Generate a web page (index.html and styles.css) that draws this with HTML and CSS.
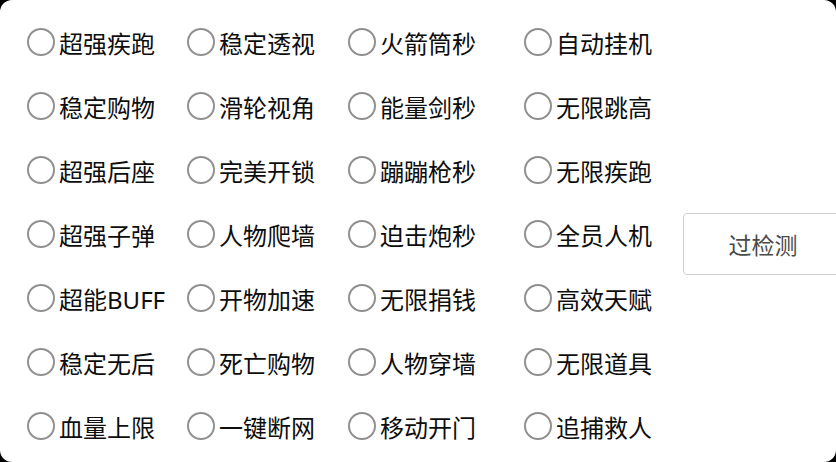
FILE: index.html
```html
<!DOCTYPE html>
<html lang="zh-CN">
<head>
    <meta charset="UTF-8">
    <meta name="viewport" content="width=device-width, initial-scale=1.0">
    <title>功能面板</title>
    <link rel="stylesheet" href="styles.css">
</head>
<body>
    <div class="panel">
        <div class="options">
            <label class="option"><input type="radio" name="opt"><span class="dot"></span>超强疾跑</label>
            <label class="option"><input type="radio" name="opt"><span class="dot"></span>稳定透视</label>
            <label class="option"><input type="radio" name="opt"><span class="dot"></span>火箭筒秒</label>
            <label class="option"><input type="radio" name="opt"><span class="dot"></span>自动挂机</label>

            <label class="option"><input type="radio" name="opt"><span class="dot"></span>稳定购物</label>
            <label class="option"><input type="radio" name="opt"><span class="dot"></span>滑轮视角</label>
            <label class="option"><input type="radio" name="opt"><span class="dot"></span>能量剑秒</label>
            <label class="option"><input type="radio" name="opt"><span class="dot"></span>无限跳高</label>

            <label class="option"><input type="radio" name="opt"><span class="dot"></span>超强后座</label>
            <label class="option"><input type="radio" name="opt"><span class="dot"></span>完美开锁</label>
            <label class="option"><input type="radio" name="opt"><span class="dot"></span>蹦蹦枪秒</label>
            <label class="option"><input type="radio" name="opt"><span class="dot"></span>无限疾跑</label>

            <label class="option"><input type="radio" name="opt"><span class="dot"></span>超强子弹</label>
            <label class="option"><input type="radio" name="opt"><span class="dot"></span>人物爬墙</label>
            <label class="option"><input type="radio" name="opt"><span class="dot"></span>迫击炮秒</label>
            <label class="option"><input type="radio" name="opt"><span class="dot"></span>全员人机</label>

            <label class="option"><input type="radio" name="opt"><span class="dot"></span>超能BUFF</label>
            <label class="option"><input type="radio" name="opt"><span class="dot"></span>开物加速</label>
            <label class="option"><input type="radio" name="opt"><span class="dot"></span>无限捐钱</label>
            <label class="option"><input type="radio" name="opt"><span class="dot"></span>高效天赋</label>

            <label class="option"><input type="radio" name="opt"><span class="dot"></span>稳定无后</label>
            <label class="option"><input type="radio" name="opt"><span class="dot"></span>死亡购物</label>
            <label class="option"><input type="radio" name="opt"><span class="dot"></span>人物穿墙</label>
            <label class="option"><input type="radio" name="opt"><span class="dot"></span>无限道具</label>

            <label class="option"><input type="radio" name="opt"><span class="dot"></span>血量上限</label>
            <label class="option"><input type="radio" name="opt"><span class="dot"></span>一键断网</label>
            <label class="option"><input type="radio" name="opt"><span class="dot"></span>移动开门</label>
            <label class="option"><input type="radio" name="opt"><span class="dot"></span>追捕救人</label>
        </div>
        <button class="check-btn">过检测</button>
    </div>
</body>
</html>
```

FILE: styles.css
```css
html, body {
    margin: 0;
    height: 100%;
    background: #000;
    overflow: hidden;
}
.panel {
    width: 836px;
    height: 462px;
    background: #fff;
    border-radius: 12px;
    display: flex;
    align-items: flex-start;
    overflow: hidden;
    font-family: "Noto Sans", "Noto Sans CJK SC", sans-serif;
}
.options {
    display: grid;
    grid-template-columns: 160px 161px 176px 159px;
    grid-auto-rows: 64px;
    padding: 10px 0 0 27px;
    flex-shrink: 0;
}
.option {
    display: flex;
    align-items: center;
    gap: 4px;
    font-size: 24px;
    color: #0d0d0d;
    white-space: nowrap;
    cursor: pointer;
}
.option input {
    display: none;
}
.dot {
    width: 28px;
    height: 28px;
    box-sizing: border-box;
    border: 2px solid #909090;
    border-radius: 50%;
    flex-shrink: 0;
}
.option input:checked + .dot {
    border: 8px solid #0078d7;
}
.check-btn {
    flex-shrink: 0;
    align-self: center;
    margin-top: 26px;
    width: 160px;
    height: 62px;
    background: #fff;
    border: 1px solid #cfcfcf;
    border-radius: 4px;
    font-family: "Noto Sans CJK SC", sans-serif;
    font-size: 23px;
    color: #4a4a4a;
    cursor: pointer;
}
```
